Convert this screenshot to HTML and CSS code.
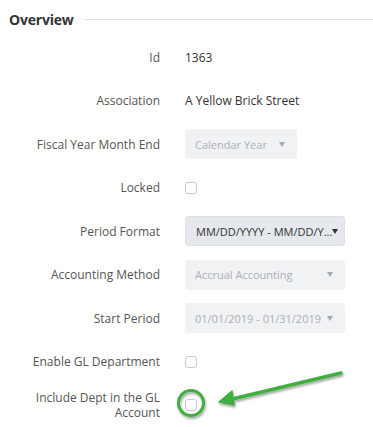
FILE: index.html
```html
<!DOCTYPE html>
<html lang="en">
<head>
  <meta charset="UTF-8" />
  <title>Overview</title>
  <link rel="stylesheet" href="styles.css">
</head>
<body>
  <section class="panel">
    <header class="panel-head">
      <h2>Overview</h2>
      <span class="rule"></span>
    </header>

    <div class="form">
      <div class="row">
        <label>Id</label>
        <div class="val">1363</div>
      </div>
      <div class="row">
        <label>Association</label>
        <div class="val">A Yellow Brick Street</div>
      </div>
      <div class="row">
        <label>Fiscal Year Month End</label>
        <div class="select disabled short"><span>Calendar Year</span><i class="caret"></i></div>
      </div>
      <div class="row">
        <label>Locked</label>
        <span class="check"></span>
      </div>
      <div class="row">
        <label>Period Format</label>
        <div class="select active"><span>MM/DD/YYYY - MM/DD/Y...</span><i class="caret"></i></div>
      </div>
      <div class="row">
        <label>Accounting Method</label>
        <div class="select disabled"><span>Accrual Accounting</span><i class="caret"></i></div>
      </div>
      <div class="row">
        <label>Start Period</label>
        <div class="select disabled"><span>01/01/2019 - 01/31/2019</span><i class="caret"></i></div>
      </div>
      <div class="row">
        <label>Enable GL Department</label>
        <span class="check"></span>
      </div>
      <div class="row">
        <label>Include Dept in the GL Account</label>
        <span class="check"></span>
      </div>
    </div>

    <!-- annotation drawn over the form -->
    <svg class="note" width="373" height="427" viewBox="0 0 373 427">
      <defs>
        <filter id="shade" x="-20%" y="-50%" width="140%" height="200%">
          <feDropShadow dx="1" dy="2" stdDeviation="1.2" flood-color="#000" flood-opacity=".35"/>
        </filter>
      </defs>
      <g filter="url(#shade)" stroke="#3fae3f" fill="none" stroke-linecap="round">
        <circle cx="191" cy="403" r="12.5" stroke-width="3"/>
        <line x1="341" y1="373" x2="228" y2="400" stroke-width="3.5"/>
        <path d="M219 402 L232 391 L234 405 Z" fill="#3fae3f" stroke-width="1.5" stroke-linejoin="round"/>
      </g>
    </svg>
  </section>
</body>
</html>
```

FILE: styles.css
```css
*{box-sizing:border-box;}

body{
  margin:0;
  background:#fff;
  font-family:"Open Sans","Noto Sans",sans-serif;
  font-size:12px;
  color:#333;
}

.panel{position:relative;height:427px;overflow:hidden;}

/* ---- title ---- */
.panel-head{
  display:flex;
  align-items:center;
  gap:11px;
  padding:9px 0 0 9px;
  height:30px;
}
.panel-head h2{
  margin:0;
  font-size:14px;
  font-weight:700;
  color:#333;
  letter-spacing:-.2px;
}
.rule{flex:1;height:1px;background:#d6e1ef;}

/* ---- form rows ---- */
.form{
  display:flex;
  flex-direction:column;
  gap:13.5px;
  padding-top:12px;
}
.row{
  display:grid;
  grid-template-columns:160px auto;
  column-gap:25px;
  align-items:center;
  min-height:30px;
}
.row label{
  text-align:right;
  color:#555;
  line-height:15px;
  padding-left:20px;
}
.val{color:#333;}

.select{
  display:flex;
  align-items:center;
  justify-content:space-between;
  width:160px;
  height:30px;
  padding:0 12px 0 10px;
  border-radius:3px;
  font-size:11px;
  white-space:nowrap;
}
.select.short{width:112px;}
.select.disabled{background:#f1f2f4;color:#aab0b7;}
.select.active{background:#e5e8ec;color:#333;border:1px solid #dde1e6;padding-right:8px;}
.caret{
  width:0;height:0;
  border-left:3.5px solid transparent;
  border-right:3.5px solid transparent;
  border-top:5px solid #a3a9b0;
}
.select.active .caret{border-top-color:#333;}

.check{
  width:12px;height:12px;
  border:1px solid #c5cad2;
  border-radius:3px;
  background:#fff;
}

.note{position:absolute;top:0;left:0;pointer-events:none;}
```
